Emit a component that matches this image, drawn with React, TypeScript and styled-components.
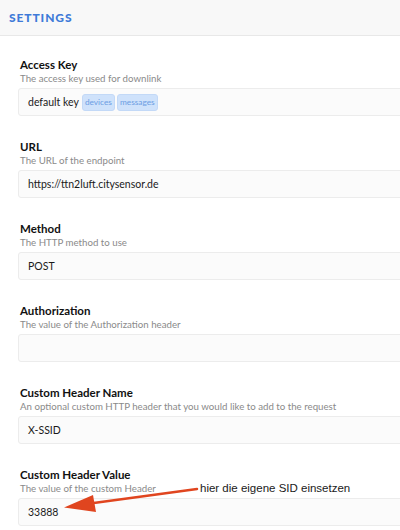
import React from "react";
import styled, { createGlobalStyle } from "styled-components";

const Global = createGlobalStyle`
  html, body { margin: 0; padding: 0; background: #fff; overflow: hidden; }
  body { font-family: Lato, "Open Sans", sans-serif; -webkit-font-smoothing: antialiased; }
`;

const Page = styled.div`
  width: 400px;
  height: 530px;
  overflow: hidden;
  position: relative;
`;

const Header = styled.div`
  height: 36px;
  background: #f8f8f8;
  border-bottom: 1px solid #e8e8e8;
  box-sizing: border-box;
  display: flex;
  align-items: center;
  padding-left: 9px;
`;

const Title = styled.h1`
  margin: 0;
  font-family: Lato, sans-serif;
  font-weight: 900;
  font-size: 12px;
  letter-spacing: 0.9px;
  color: #3f7bd8;
`;

const Form = styled.div`
  display: flex;
  flex-direction: column;
  gap: 24px;
  padding: 22px 0 0 18px;
`;

const Field = styled.div`
  display: flex;
  flex-direction: column;
`;

const Label = styled.div`
  font-weight: 700;
  font-size: 11.5px;
  line-height: 14px;
  padding-left: 2px;
  color: #111;
`;

const Desc = styled.div`
  font-size: 9.7px;
  line-height: 12px;
  padding-left: 2px;
  color: #8a8a8a;
  margin-bottom: 4px;
`;

const Input = styled.div`
  width: 400px;
  height: 28px;
  box-sizing: border-box;
  background: #fbfbfb;
  border: 1px solid #ececec;
  border-radius: 3px;
  display: flex;
  align-items: center;
  gap: 2px;
  padding-left: 9px;
  font-size: 10.5px;
  color: #1a1a1a;
`;

const Value = styled.span`
  margin-right: 1px;
`;

const Tag = styled.span`
  display: inline-flex;
  align-items: center;
  height: 17px;
  padding: 0 2px;
  background: #cfe2fb;
  border: 1px solid #c3d9f7;
  border-radius: 3px;
  color: #6c9de3;
  font-size: 8.3px;
  box-sizing: border-box;
`;

const Annotation = styled.div`
  position: absolute;
  left: 200px;
  top: 482px;
  font-family: "Liberation Sans", Arial, sans-serif;
  font-size: 11.5px;
  color: #1a1a1a;
`;

const Arrow = styled.svg`
  position: absolute;
  left: 0;
  top: 0;
  pointer-events: none;
`;

const fields = [
  { label: "Access Key", desc: "The access key used for downlink", value: "default key", tags: ["devices", "messages"] },
  { label: "URL", desc: "The URL of the endpoint", value: "https://ttn2luft.citysensor.de" },
  { label: "Method", desc: "The HTTP method to use", value: "POST" },
  { label: "Authorization", desc: "The value of the Authorization header", value: "" },
  { label: "Custom Header Name", desc: "An optional custom HTTP header that you would like to add to the request", value: "X-SSID" },
  { label: "Custom Header Value", desc: "The value of the custom Header", value: "33888" },
];

export default function App() {
  return (
    <Page>
      <Global />
      <Header>
        <Title>SETTINGS</Title>
      </Header>
      <Form>
        {fields.map((f) => (
          <Field key={f.label}>
            <Label>{f.label}</Label>
            <Desc>{f.desc}</Desc>
            <Input>
              <Value>{f.value}</Value>
              {f.tags?.map((t) => <Tag key={t}>{t}</Tag>)}
            </Input>
          </Field>
        ))}
      </Form>
      <Annotation>hier die eigene SID einsetzen</Annotation>
      <Arrow width="400" height="530" viewBox="0 0 400 530">
        <line x1="197" y1="489" x2="90" y2="503.5" stroke="#e0451f" strokeWidth="2.5" strokeLinecap="round" />
        <polygon points="64,507.5 93,495 96,512" fill="#e0451f" />
      </Arrow>
    </Page>
  );
}
